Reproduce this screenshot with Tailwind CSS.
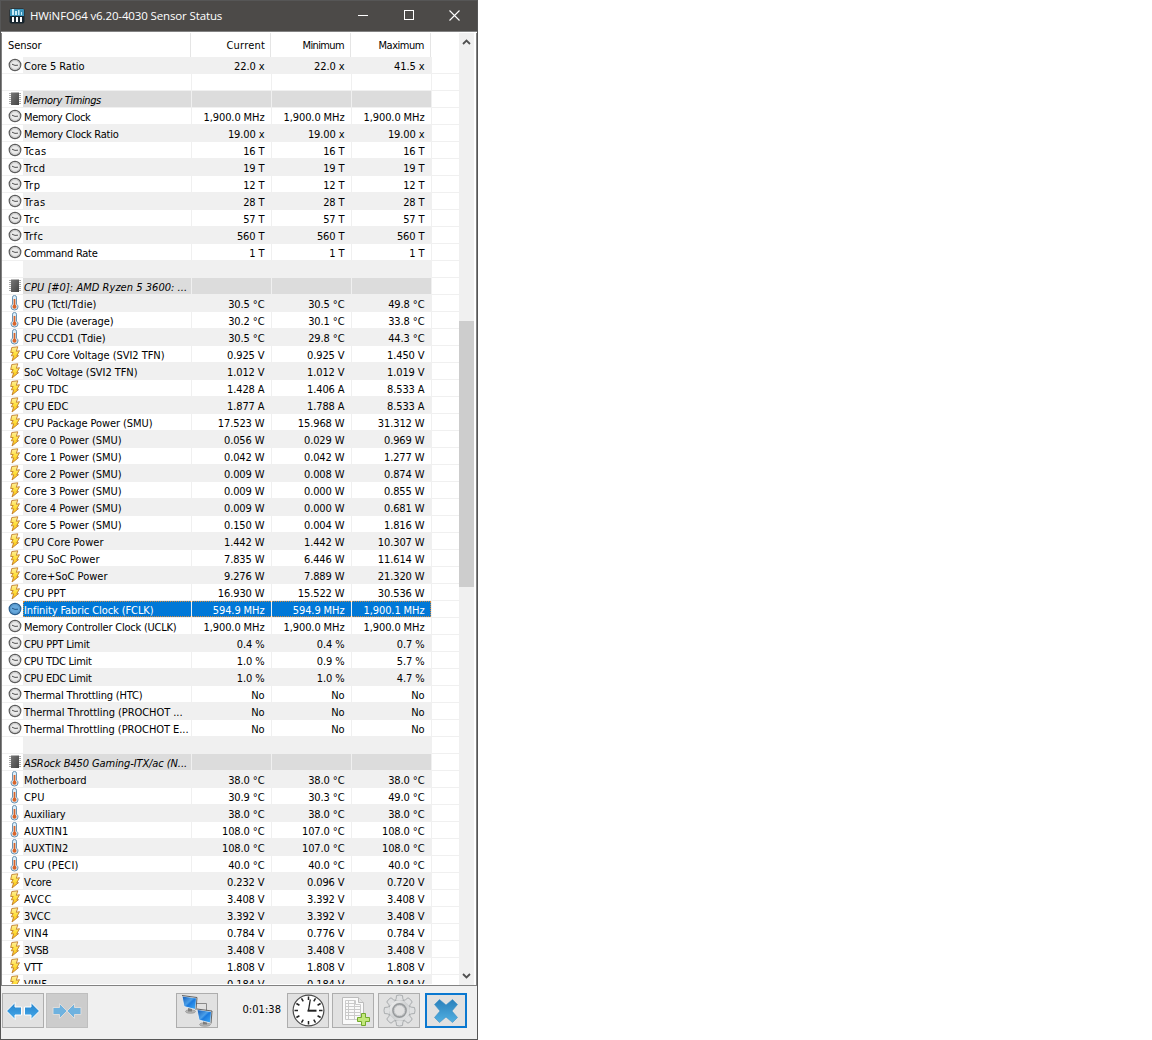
<!DOCTYPE html>
<html lang="en">
  <head>
    <meta charset="UTF-8" />
    <meta name="viewport" content="width=device-width, initial-scale=1.0" />
    <title>HWiNFO64 Sensor Status</title>
    <script src="https://cdn.jsdelivr.net/npm/@tailwindcss/browser@4"></script>
  </head>
  <body class="bg-white">
    <!-- shared row icons -->
    <svg class="absolute size-0" aria-hidden="true">
      <defs>
        <linearGradient id="boltFill" x1="0" y1="0" x2="0" y2="1">
          <stop offset="0" stop-color="#fff0a0" />
          <stop offset=".5" stop-color="#ffe03a" />
          <stop offset="1" stop-color="#f8b812" />
        </linearGradient>
        <linearGradient id="chipFill" x1="0" y1="0" x2="1" y2="1">
          <stop offset="0" stop-color="#777" />
          <stop offset="1" stop-color="#444" />
        </linearGradient>
        <linearGradient id="blueFill" x1="0" y1="0" x2="0" y2="1">
          <stop offset="0" stop-color="#2583cc" />
          <stop offset="1" stop-color="#45a9ea" />
        </linearGradient>
        <linearGradient id="crossFill" x1="0" y1="0" x2="0" y2="1">
          <stop offset="0" stop-color="#2a80bb" />
          <stop offset="1" stop-color="#52b0e2" />
        </linearGradient>
        <linearGradient id="screenFill" x1="0" y1="0" x2="1" y2="1">
          <stop offset="0" stop-color="#1258b4" />
          <stop offset=".45" stop-color="#4b9fe8" />
          <stop offset=".55" stop-color="#1a7ade" />
          <stop offset="1" stop-color="#45b0fa" />
        </linearGradient>
        <linearGradient id="gearFill" x1="0" y1="0" x2="1" y2="1">
          <stop offset="0" stop-color="#f6f6f6" />
          <stop offset=".5" stop-color="#cfd1d2" />
          <stop offset="1" stop-color="#e8e9ea" />
        </linearGradient>
        <symbol id="clock" viewBox="0 0 14 14">
          <ellipse cx="7" cy="7" rx="5.800" ry="5.600" fill="#eaeaea" stroke="#5c5c5c" stroke-width="1.200" />
          <ellipse cx="7" cy="7" rx="4.600" ry="4.400" fill="none" stroke="#c0c0c0" stroke-width=".8" />
          <path d="M4 6.200l3 1.200 3-.2" fill="none" stroke="#555" />
        </symbol>
        <symbol id="clock-on" viewBox="0 0 14 14">
          <ellipse cx="7" cy="7" rx="5.800" ry="5.600" fill="#67a8dc" stroke="#2a5f90" stroke-width="1.200" />
          <ellipse cx="7" cy="7" rx="4.600" ry="4.400" fill="none" stroke="#5293c8" stroke-width=".8" />
          <path d="M4 6.200l3 1.200 3-.2" fill="none" stroke="#24598b" />
        </symbol>
        <symbol id="chip" viewBox="0 0 14 14">
          <path d="M1 1.500h12M1 3.500h12M1 5.500h12M1 7.500h12M1 9.500h12M1 11.500h12" stroke="#a0a0a0" stroke-width=".9" />
          <rect x="3" y=".5" width="8" height="12.500" fill="url(#chipFill)" />
        </symbol>
        <symbol id="temp" viewBox="0 0 14 16">
          <path d="M4.500 2.200q0-1.700 2-1.700t2 1.700v7q1.500 1 1.500 2.700 0 3.100-3.500 3.100T3 11.900q0-1.700 1.500-2.700z" fill="#dcedf8" stroke="#6b93b2" />
          <path d="M6.500 4v7" stroke="#d9652a" stroke-width="1.700" />
          <circle cx="6.500" cy="11.800" r="2" fill="#d9652a" />
        </symbol>
        <symbol id="bolt" viewBox="0 0 14 16">
          <path d="M3.800 1.500L9.800.8 8.300 5.300l3.200-.6-2.700 5h1.700L4 15l1.600-5.200H3.300l1.900-3.300H2.700z" fill="url(#boltFill)" stroke="#bf7f30" stroke-width=".9" stroke-linejoin="round" />
        </symbol>
      </defs>
    </svg>

    <main class="flex h-[1040px] w-[478px] flex-col border border-[#565656] bg-[#f0f0f0] font-['DejaVu_Sans_Condensed','DejaVu_Sans',sans-serif] text-[11px] text-black">
      <header class="flex h-[30px] shrink-0 items-center bg-[#4c4a48] pl-2 text-white">
        <svg class="mb-px size-4" viewBox="0 0 16 16">
          <rect x=".5" y=".5" width="15" height="15" rx="2" fill="#16242d" />
          <path d="M1 2q0-1 1-1h12q1 0 1 1v6H1z" fill="#3a92b8" />
          <path d="M3 1h2v6H3zM6 3h2v4H6zM9 2h1.500v5H9zM12 4h1v3h-1z" fill="#c8eaf5" />
          <path d="M3 9h2v5H3zM7 9h2v5H7zM11 9h2v5h-2z" fill="#fff" />
        </svg>
        <h1 class="mb-px ml-[5px] flex-1 font-['Open_Sans',sans-serif] text-[11.5px] tracking-[-0.13px] whitespace-nowrap">HWiNFO64 v6.20-4030 Sensor Status</h1>
        <div class="flex h-[28px] self-start">
          <button class="grid w-[46px] place-items-center" aria-label="Minimize"><span class="h-px w-[10px] bg-white"></span></button>
          <button class="grid w-[45px] place-items-center" aria-label="Maximize"><span class="size-[10px] border border-white"></span></button>
          <button class="grid w-[46px] place-items-center" aria-label="Close">
            <svg class="size-[11px]" viewBox="0 0 11 11"><path d="M.5.5l10 10m0-10l-10 10" stroke="#fff" stroke-width="1.100" /></svg>
          </button>
        </div>
      </header>

      <section class="flex h-[955px] shrink-0 border-b border-[#828282] bg-white pt-[1px] border-t border-t-[#828282]">
        <div class="w-px shrink-0 bg-[#828282]"></div>
        <div class="w-[457px] shrink-0 overflow-hidden">
          <div class="flex h-[24px] leading-[25px]">
            <div class="w-[189px] border-r border-[#e5e5e5] pl-[6px]"><span data-width="33">Sensor</span></div>
            <div class="w-[80px] border-r border-[#e5e5e5] pr-[5px] text-right"><span data-width="38">Current</span></div>
            <div class="w-[80px] border-r border-[#e5e5e5] pr-[6px] text-right"><span data-width="41">Minimum</span></div>
            <div class="w-[80px] border-r border-[#e5e5e5] pr-[6px] text-right"><span data-width="45">Maximum</span></div>
          </div>
          <div id="rows" class="h-[927px] overflow-hidden"></div>
        </div>
        <div class="flex w-[15px] shrink-0 flex-col items-center bg-[#f0f0f0]">
          <svg class="mt-[5px] h-[8px] w-[9px]" viewBox="0 0 9 8"><path d="M1 6l3.500-3.500L8 6" fill="none" stroke="#505050" stroke-width="1.800" /></svg>
          <div class="mt-[275px] h-[266px] w-full bg-[#cdcdcd]"></div>
          <svg class="mt-[385px] h-[8px] w-[9px]" viewBox="0 0 9 8"><path d="M1 2l3.500 3.500L8 2" fill="none" stroke="#505050" stroke-width="1.800" /></svg>
        </div>
        <div class="flex-1 border-r border-[#828282]"></div>
      </section>

      <footer class="flex flex-1 items-start pt-[7px] pl-px">
        <button class="grid h-[35px] w-[42px] place-items-center border border-[#adadad] bg-[#e1e1e1]" aria-label="Expand">
          <svg class="h-[18px] w-[34px]" viewBox="0 0 34 18">
            <path d="M.5 9L9 .5V5h6.500v8H9v4.500zM33.500 9L25 .5V5h-6.500v8H25v4.500z" fill="url(#blueFill)" stroke="#fff" />
          </svg>
        </button>
        <button class="ml-[2px] grid h-[35px] w-[42px] place-items-center border border-[#bfbfbf] bg-[#cccccc]" aria-label="Shrink">
          <svg class="h-[16px] w-[30px]" viewBox="0 0 30 16">
            <path d="M15 8L7.500.5V4.500H1v7h6.500v4zM15 8L22.500.5V4.500H29v7h-6.500v4z" fill="#6fb2df" stroke="#dcdcdc" />
          </svg>
        </button>
        <button class="ml-[88px] grid h-[35px] w-[42px] place-items-center border border-[#adadad] bg-[#e1e1e1]" aria-label="Network">
          <svg class="h-[33px] w-[36px]" viewBox="0 0 36 33">
            <path d="M17 9.500h10.500v8" fill="none" stroke="#8a8a8a" />
            <ellipse cx="11.500" cy="17.500" rx="5" ry="1.800" fill="#b5b5b5" stroke="#8a8a8a" stroke-width=".6" />
            <path d="M9 14h4v3.500H9z" fill="#7c7c7c" />
            <path d="M3 2l14.500 2-1 11.500L5 12.500z" fill="url(#screenFill)" stroke="#f2f2f2" stroke-width=".8" />
            <path d="M3 1.500l15 2-1 12.500" fill="none" stroke="#444" stroke-width=".8" />
            <ellipse cx="26" cy="30.500" rx="5.500" ry="1.800" fill="#b5b5b5" stroke="#8a8a8a" stroke-width=".6" />
            <path d="M24 27h4v3.500h-4z" fill="#7c7c7c" />
            <path d="M18 15.500l14.500 2-1 11.500-11.500-3z" fill="url(#screenFill)" stroke="#f2f2f2" stroke-width=".8" />
            <path d="M18 15l15 2-1 12.500" fill="none" stroke="#444" stroke-width=".8" />
          </svg>
        </button>
        <div class="ml-[24px] w-[39px] text-right leading-[33px] whitespace-nowrap"><span data-width="38">0:01:38</span></div>
        <button class="ml-[6px] grid h-[35px] w-[42px] place-items-center border border-[#adadad] bg-[#e1e1e1]" aria-label="Reset clock">
          <svg class="size-[33px]" viewBox="0 0 33 33">
            <circle cx="16.500" cy="16.500" r="15.400" fill="#fff" stroke="#4a4a4a" stroke-width="1.200" />
            <g id="dial" stroke="#222" stroke-width="1.500"></g>
            <path d="M16.500 16.500l1.800-11" stroke="#222" stroke-width="1.300" />
            <path d="M15.500 16.700h9" stroke="#222" stroke-width="2" />
          </svg>
        </button>
        <button class="ml-[3px] grid h-[35px] w-[42px] place-items-center border border-[#adadad] bg-[#e1e1e1]" aria-label="Log to file">
          <svg class="h-[32px] w-[34px]" viewBox="0 0 34 32">
            <path d="M6.500 2.500h16l5 5v22h-21z" fill="#fafafa" stroke="#bcbcbc" />
            <path d="M22.500 2.500v5h5" fill="#e4e4e4" stroke="#bcbcbc" />
            <path d="M9.500 5.500h10v4h5v15h-15zM9.500 8.500h10M9.500 11.500h15M9.500 14.500h15M9.500 17.500h15M9.500 20.500h15M12.500 5.500v19M18.500 5.500v19" fill="none" stroke="#cacaca" />
            <path d="M25.500 18.500h4v4h4v4h-4v4h-4v-4h-4v-4h4z" fill="#c2e87a" stroke="#72a82c" />
          </svg>
        </button>
        <button class="ml-[4px] grid h-[35px] w-[42px] place-items-center border border-[#adadad] bg-[#e1e1e1]" aria-label="Settings">
          <svg class="size-[33px]" viewBox="-16.500 -16.500 33 33">
            <g id="gear" fill="#dfe0e1" stroke="#a4a7a9" stroke-width=".9" stroke-linejoin="round"></g>
            <circle r="10.300" fill="url(#gearFill)" />
            <circle r="6.500" fill="none" stroke="#989b9d" stroke-width="1.800" />
            <circle r="5.300" fill="#e1e1e1" stroke="#c5c7c9" />
          </svg>
        </button>
        <button class="ml-[5px] grid h-[35px] w-[42px] place-items-center border-2 border-[#0a78d0] bg-[#e1e1e1]" aria-label="Close sensors">
          <svg class="h-[26px] w-[26px]" viewBox="0 0 26 26">
            <path d="M6.500 1.500L13 7l6.500-5.500 5 5L19 13l5.500 6.500-5 5L13 19l-6.500 5.500-5-5L7 13 1.500 6.500z" fill="url(#crossFill)" stroke="#3c90c6" stroke-width=".6" stroke-linejoin="round" />
          </svg>
        </button>
      </footer>
    </main>

    <script>
      // [icon, label, label width, current, minimum, maximum]
      const sensors = [
        ["clock", "Core 5 Ratio", 60, "22.0 x", "22.0 x", "41.5 x"],
        [],
        ["chip", "Memory Timings", 76],
        ["clock", "Memory Clock", 66, "1,900.0 MHz", "1,900.0 MHz", "1,900.0 MHz"],
        ["clock", "Memory Clock Ratio", 94, "19.00 x", "19.00 x", "19.00 x"],
        ["clock", "Tcas", 22, "16 T", "16 T", "16 T"],
        ["clock", "Trcd", 21, "19 T", "19 T", "19 T"],
        ["clock", "Trp", 16, "12 T", "12 T", "12 T"],
        ["clock", "Tras", 21, "28 T", "28 T", "28 T"],
        ["clock", "Trc", 16, "57 T", "57 T", "57 T"],
        ["clock", "Trfc", 19, "560 T", "560 T", "560 T"],
        ["clock", "Command Rate", 73, "1 T", "1 T", "1 T"],
        [],
        ["chip", "CPU [#0]: AMD Ryzen 5 3600: ...", 162],
        ["temp", "CPU (Tctl/Tdie)", 72, "30.5 °C", "30.5 °C", "49.8 °C"],
        ["temp", "CPU Die (average)", 89, "30.2 °C", "30.1 °C", "33.8 °C"],
        ["temp", "CPU CCD1 (Tdie)", 81, "30.5 °C", "29.8 °C", "44.3 °C"],
        ["bolt", "CPU Core Voltage (SVI2 TFN)", 140, "0.925 V", "0.925 V", "1.450 V"],
        ["bolt", "SoC Voltage (SVI2 TFN)", 113, "1.012 V", "1.012 V", "1.019 V"],
        ["bolt", "CPU TDC", 44, "1.428 A", "1.406 A", "8.533 A"],
        ["bolt", "CPU EDC", 44, "1.877 A", "1.788 A", "8.533 A"],
        ["bolt", "CPU Package Power (SMU)", 128, "17.523 W", "15.968 W", "31.312 W"],
        ["bolt", "Core 0 Power (SMU)", 97, "0.056 W", "0.029 W", "0.969 W"],
        ["bolt", "Core 1 Power (SMU)", 97, "0.042 W", "0.042 W", "1.277 W"],
        ["bolt", "Core 2 Power (SMU)", 97, "0.009 W", "0.008 W", "0.874 W"],
        ["bolt", "Core 3 Power (SMU)", 97, "0.009 W", "0.000 W", "0.855 W"],
        ["bolt", "Core 4 Power (SMU)", 97, "0.009 W", "0.000 W", "0.681 W"],
        ["bolt", "Core 5 Power (SMU)", 97, "0.150 W", "0.004 W", "1.816 W"],
        ["bolt", "CPU Core Power", 79, "1.442 W", "1.442 W", "10.307 W"],
        ["bolt", "CPU SoC Power", 75, "7.835 W", "6.446 W", "11.614 W"],
        ["bolt", "Core+SoC Power", 83, "9.276 W", "7.889 W", "21.320 W"],
        ["bolt", "CPU PPT", 41, "16.930 W", "15.522 W", "30.536 W"],
        ["clock-on", "Infinity Fabric Clock (FCLK)", 129, "594.9 MHz", "594.9 MHz", "1,900.1 MHz"],
        ["clock", "Memory Controller Clock (UCLK)", 152, "1,900.0 MHz", "1,900.0 MHz", "1,900.0 MHz"],
        ["clock", "CPU PPT Limit", 65, "0.4 %", "0.4 %", "0.7 %"],
        ["clock", "CPU TDC Limit", 67, "1.0 %", "0.9 %", "5.7 %"],
        ["clock", "CPU EDC Limit", 67, "1.0 %", "1.0 %", "4.7 %"],
        ["clock", "Thermal Throttling (HTC)", 118, "No", "No", "No"],
        ["clock", "Thermal Throttling (PROCHOT ...", 158, "No", "No", "No"],
        ["clock", "Thermal Throttling (PROCHOT E...", 164, "No", "No", "No"],
        [],
        ["chip", "ASRock B450 Gaming-ITX/ac (N...", 162],
        ["temp", "Motherboard", 62, "38.0 °C", "38.0 °C", "38.0 °C"],
        ["temp", "CPU", 20, "30.9 °C", "30.3 °C", "49.0 °C"],
        ["temp", "Auxiliary", 41, "38.0 °C", "38.0 °C", "38.0 °C"],
        ["temp", "AUXTIN1", 44, "108.0 °C", "107.0 °C", "108.0 °C"],
        ["temp", "AUXTIN2", 44, "108.0 °C", "107.0 °C", "108.0 °C"],
        ["temp", "CPU (PECI)", 54, "40.0 °C", "40.0 °C", "40.0 °C"],
        ["bolt", "Vcore", 27, "0.232 V", "0.096 V", "0.720 V"],
        ["bolt", "AVCC", 27, "3.408 V", "3.392 V", "3.408 V"],
        ["bolt", "3VCC", 26, "3.392 V", "3.392 V", "3.408 V"],
        ["bolt", "VIN4", 24, "0.784 V", "0.776 V", "0.784 V"],
        ["bolt", "3VSB", 24, "3.408 V", "3.408 V", "3.408 V"],
        ["bolt", "VTT", 18, "1.808 V", "1.808 V", "1.808 V"],
        ["bolt", "VIN5", 23, "0.184 V", "0.184 V", "0.184 V"],
      ];

      document.getElementById("rows").innerHTML = sensors
        .map(([icon, label = "", width = 0, ...values], i) => {
          let tone = i % 2 ? "bg-white" : "bg-[#f0f0f0]";
          if (icon === "chip") tone = "bg-[#dcdcdc] italic";
          if (icon === "clock-on") tone = "bg-[#0078d7] text-white outline-1 -outline-offset-1 outline-dotted outline-[#d08a40]";
          const cells = [0, 1, 2]
            .map((c) => `<div class="w-[80px] border-l border-[#f0f0f0] pr-[6.5px] text-right tracking-[-0.1px]">${values[c] || ""}</div>`)
            .join("");
          const svg = icon ? `<svg class="h-[16px] w-[14px]"><use href="#${icon}" /></svg>` : "";
          return `
            <div class="flex h-[17px] border-b border-[#f0f0f0] leading-[19px] whitespace-nowrap">
              <div class="w-[21px] pl-[6px]">${svg}</div>
              <div class="flex w-[408px] ${tone}">
                <div class="w-[168px] pl-px"><span data-width="${width}">${label}</span></div>
                ${cells}
              </div>
              <div class="flex-1 border-l border-[#f0f0f0]"></div>
            </div>`;
        })
        .join("");

      // spread the letters of each label over its width
      const ctx = document.createElement("canvas").getContext("2d");
      ctx.font = "11px 'DejaVu Sans Condensed', 'DejaVu Sans', sans-serif";
      document.querySelectorAll("[data-width]").forEach((el) => {
        const text = el.textContent;
        if (!text) return;
        const gap = (Number(el.dataset.width) + 0.5 - ctx.measureText(text).width) / text.length;
        el.style.letterSpacing = `${gap.toFixed(3)}px`;
      });

      // dial ticks and gear teeth
      let ticks = "";
      for (let a = 0; a < 360; a += 30) ticks += `<path d="M16.500 2.500v3.500" transform="rotate(${a} 16.500 16.500)" />`;
      document.getElementById("dial").innerHTML = ticks;
      let teeth = "";
      for (let a = 0; a < 360; a += 45) teeth += `<path d="M-4.500-9.500q1.500-1.500 1.500-5.500q3-1 6 0q0 4 1.500 5.500z" transform="rotate(${a})" />`;
      document.getElementById("gear").innerHTML = teeth;
    </script>
  </body>
</html>
